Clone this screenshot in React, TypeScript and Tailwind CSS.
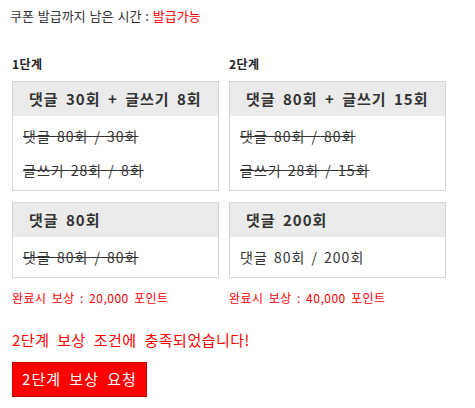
import React from "react";

const font = { fontFamily: '"Noto Sans CJK KR", "Noto Sans", sans-serif' };

function Box({ title, lines, strike }: { title: string; lines: string[]; strike: boolean }) {
  return (
    <div className="border border-[#d6d6d6] bg-white">
      <div className="h-[34px] bg-[#ebebeb] pl-[16px] flex items-center text-[15px] font-bold text-[#333] tracking-[1px] [word-spacing:3px]">
        {title}
      </div>
      <div className="py-[3px] px-[10px]">
        {lines.map((l, i) => (
          <div
            key={i}
            className={`leading-[34px] text-[14px] text-[#333] tracking-[1px] [word-spacing:2px] ${strike ? "line-through" : ""}`}
          >
            {l}
          </div>
        ))}
      </div>
    </div>
  );
}

export default function App() {
  return (
    <div className="w-[475px] h-[408px] bg-white text-[#333]" style={font}>
      <div className="pt-[8px] pl-[10px] text-[13px] leading-[16px] [word-spacing:1px]">
        쿠폰 발급까지 남은 시간 : <span className="text-[#ff0000]">발급가능</span>
      </div>
      <div className="flex gap-[10px] pl-[12px] mt-[32px]">
        <div className="w-[207px]">
          <div className="text-[12px] font-bold leading-[16px] text-[#222] tracking-[0.5px]">1단계</div>
          <div className="mt-[9px]">
            <Box title="댓글 30회 + 글쓰기 8회" lines={["댓글 80회 / 30회", "글쓰기 28회 / 8회"]} strike />
          </div>
          <div className="mt-[11px]">
            <Box title="댓글 80회" lines={["댓글 80회 / 80회"]} strike />
          </div>
          <div className="mt-[12px] text-[12px] leading-[16px] text-[#ff0000] tracking-[0.5px] [word-spacing:2px]">
            완료시 보상 : 20,000 포인트
          </div>
        </div>
        <div className="w-[217px]">
          <div className="text-[12px] font-bold leading-[16px] text-[#222] tracking-[0.5px]">2단계</div>
          <div className="mt-[9px]">
            <Box title="댓글 80회 + 글쓰기 15회" lines={["댓글 80회 / 80회", "글쓰기 28회 / 15회"]} strike />
          </div>
          <div className="mt-[11px]">
            <Box title="댓글 200회" lines={["댓글 80회 / 200회"]} strike={false} />
          </div>
          <div className="mt-[12px] text-[12px] leading-[16px] text-[#ff0000] tracking-[0.5px] [word-spacing:2px]">
            완료시 보상 : 40,000 포인트
          </div>
        </div>
      </div>
      <div className="pl-[12px] mt-[24px] text-[15px] leading-[20px] text-[#ff0000] tracking-[0.5px] [word-spacing:4px]">
        2단계 보상 조건에 충족되었습니다!
      </div>
      <div className="pl-[12px] mt-[12px]">
        <button className="h-[35px] w-[135px] bg-[#ff0000] border border-[#c40000] text-white text-[15px] tracking-[1px] [word-spacing:4px] flex items-center justify-center">
          2단계 보상 요청
        </button>
      </div>
    </div>
  );
}
